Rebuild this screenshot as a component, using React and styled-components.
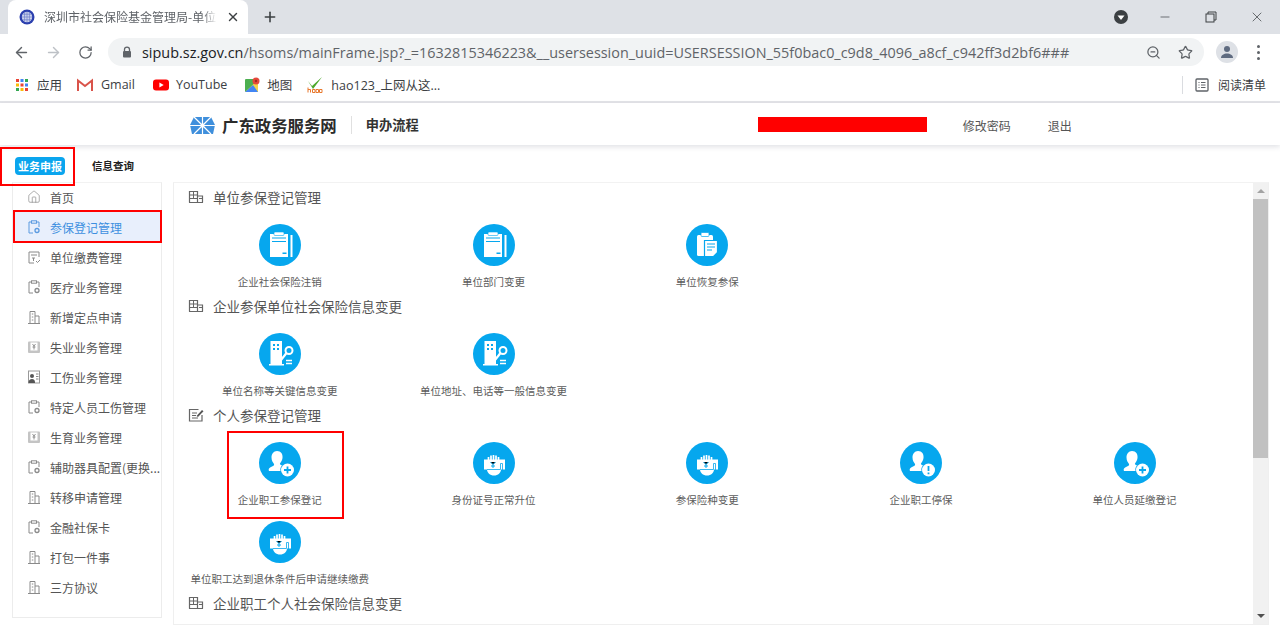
import React from "react";
import styled, { createGlobalStyle } from "styled-components";
import { ArrowLeft, ArrowRight, RotateCw, ZoomOut, Star, X, Plus, Minus, Home } from "lucide-react";

const Global = createGlobalStyle`
  html, body {
    margin: 0;
    height: 100%;
    overflow: hidden;
    background: #fff;
    font-family: "Noto Sans CJK SC", "Noto Sans", sans-serif;
  }
  *, *::before, *::after { box-sizing: border-box; }
`;

const Page = styled.div`
  width: 1280px;
  height: 633px;
  display: flex;
  flex-direction: column;
  overflow: hidden;
`;

/* browser chrome */
const TabStrip = styled.div`
  height: 34px;
  flex-shrink: 0;
  background: #dee1e6;
  display: flex;
  align-items: flex-end;
  padding-left: 8px;
`;

const BrowserTab = styled.div`
  width: 240px;
  height: 34px;
  padding: 0 8px 0 11px;
  background: #fff;
  border-radius: 8px 8px 0 0;
  display: flex;
  align-items: center;
  gap: 9px;
`;

const TabTitle = styled.span`
  flex: 1;
  font-size: 12px;
  line-height: 34px;
  color: #5f6368;
  white-space: nowrap;
  overflow: hidden;
  -webkit-mask-image: linear-gradient(to right, #000 92%, transparent);
  mask-image: linear-gradient(to right, #000 92%, transparent);
`;

const StripButton = styled.div`
  width: 28px;
  height: 34px;
  margin-left: ${(p) => p.$ml || 0}px;
  display: flex;
  align-items: center;
  justify-content: center;
  color: ${(p) => p.$color || "#3c4043"};
`;

const Toolbar = styled.div`
  height: 36px;
  flex-shrink: 0;
  background: #fff;
  padding: 4px 8px 4px 5px;
  display: flex;
  align-items: center;
`;

const NavButton = styled.div`
  width: 32px;
  height: 28px;
  display: flex;
  align-items: center;
  justify-content: center;
  color: ${(p) => (p.$off ? "#bdc1c6" : "#5f6368")};
`;

const Omnibox = styled.div`
  width: 1096px;
  height: 28px;
  margin-left: 7px;
  padding: 0 3px 0 13px;
  background: #f1f3f4;
  border-radius: 14px;
  display: flex;
  align-items: center;
`;

const Url = styled.div`
  flex: 1;
  margin-left: 9px;
  font-family: "Open Sans", sans-serif;
  font-size: 14.4px;
  letter-spacing: 0.01px;
  color: #5f6368;
  white-space: nowrap;
  overflow: hidden;
  b {
    font-weight: 400;
    color: #202124;
  }
`;

const OmniIcon = styled.div`
  width: 32px;
  display: flex;
  justify-content: center;
  color: #5f6368;
`;

const Avatar = styled.div`
  width: 22px;
  height: 22px;
  margin-left: 12px;
  border-radius: 50%;
  background: #dee1e6;
  display: flex;
  align-items: center;
  justify-content: center;
`;

const Dots = styled.div`
  margin-left: 19px;
  display: flex;
  flex-direction: column;
  gap: 3px;
  span {
    width: 3px;
    height: 3px;
    border-radius: 50%;
    background: #5f6368;
  }
`;

const Bookmarks = styled.div`
  height: 33px;
  flex-shrink: 0;
  padding: 0 14px 2px 15px;
  border-bottom: 2px solid #e3e4e8;
  display: flex;
  align-items: center;
  font-size: 12.5px;
  color: #3c4043;
`;

const Bookmark = styled.div`
  display: flex;
  align-items: center;
  gap: ${(p) => p.$gap || 8}px;
  margin-right: ${(p) => p.$mr || 16}px;
  font-family: "Open Sans", "Noto Sans CJK SC", sans-serif;
  white-space: nowrap;
`;

const ReadingList = styled.div`
  margin-left: auto;
  padding-left: 12px;
  height: 18px;
  border-left: 1px solid #dadce0;
  display: flex;
  align-items: center;
  gap: 9px;
  font-size: 12px;
`;

/* site header */
const SiteHeader = styled.header`
  height: 42px;
  flex-shrink: 0;
  padding: 2px 0 0 190px;
  background: #fff;
  box-shadow: 0 2px 5px rgba(120, 125, 140, 0.22);
  display: flex;
  align-items: center;
  position: relative;
`;

const SiteName = styled.div`
  margin-left: 7px;
  font-size: 16.4px;
  font-weight: 700;
  color: #2b2b2b;
  white-space: nowrap;
`;

const FlowName = styled.div`
  margin-left: 14px;
  padding-left: 14px;
  border-left: 1px solid #e0e0e0;
  font-size: 13.25px;
  line-height: 18px;
  font-weight: 700;
  color: #333;
`;

const HiddenName = styled.div`
  width: 169px;
  height: 15px;
  margin-left: 339px;
  margin-top: -1px;
  background: #ff0000;
`;

const HeaderLink = styled.a`
  margin-left: ${(p) => p.$ml}px;
  font-size: 12px;
  color: #555;
`;

const SiteTabs = styled.div`
  height: 37px;
  flex-shrink: 0;
  padding: 4px 0 0 15px;
  display: flex;
  align-items: center;
`;

const SiteTab = styled.div`
  position: relative;
  height: 18px;
  padding: 0 ${(p) => (p.$active ? 3 : 0)}px;
  margin-right: 27px;
  border-radius: 4px;
  background: ${(p) => (p.$active ? "#0aa5ee" : "transparent")};
  color: ${(p) => (p.$active ? "#fff" : "#222")};
  font-size: ${(p) => (p.$active ? 11 : 10.5)}px;
  font-weight: 700;
  line-height: 18px;
  white-space: nowrap;

  ${(p) =>
    p.$marked &&
    `&::after {
      content: "";
      position: absolute;
      left: -15px;
      top: -10px;
      width: 75px;
      height: 39px;
      border: 2px solid #f00;
    }`}
`;

/* page body */
const Body = styled.div`
  flex: 1;
  padding: 0 12px 0 12px;
  display: flex;
  align-items: flex-start;
  gap: 11px;
  min-height: 0;
`;

const Sidebar = styled.nav`
  width: 150px;
  height: 436px;
  flex-shrink: 0;
  border: 1px solid #ececec;
  border-top-color: #f2f2f2;
`;

const SideItem = styled.div`
  position: relative;
  height: 30px;
  margin-top: ${(p) => (p.$first ? -1 : 0)}px;
  padding-left: 14px;
  display: flex;
  align-items: center;
  gap: 9px;
  background: ${(p) => (p.$active ? "#e8effc" : "transparent")};
  color: ${(p) => (p.$active ? "#3d8fe0" : "#555")};
  font-size: 12px;
  white-space: nowrap;

  ${(p) =>
    p.$active &&
    `&::after {
      content: "";
      position: absolute;
      left: 0;
      top: -2px;
      right: -1px;
      bottom: -1px;
      border: 2px solid #f00;
    }`}
`;

const Panel = styled.main`
  width: 1096px;
  height: 443px;
  border: 1px solid #efefef;
  border-top-color: #f2f2f2;
  display: flex;
  flex-shrink: 0;
`;

const Content = styled.div`
  flex: 1;
  overflow: hidden;
  min-width: 0;
`;

const SectionHead = styled.div`
  height: 30px;
  padding: 0 0 2px 14px;
  display: flex;
  align-items: center;
  gap: 9px;
  font-size: 13.5px;
  color: #555;
`;

const TileGrid = styled.div`
  display: grid;
  grid-template-columns: repeat(5, 213.7px);
  margin-left: -1px;
`;

const Tile = styled.div`
  position: relative;
  height: 79px;
  padding-top: 11px;
  display: flex;
  flex-direction: column;
  align-items: center;

  ${(p) =>
    p.$marked &&
    `&::after {
      content: "";
      position: absolute;
      left: 54px;
      top: 0;
      width: 117px;
      height: 88px;
      border: 2px solid #f00;
    }`}
`;

const Disc = styled.div`
  width: 42px;
  height: 42px;
  border-radius: 50%;
  background: #06a7ee;
  flex-shrink: 0;
`;

const TileLabel = styled.div`
  margin-top: 7px;
  font-size: 10.5px;
  line-height: 18px;
  color: #5c5c5c;
  white-space: nowrap;
`;

const Scrollbar = styled.div`
  width: 15px;
  flex-shrink: 0;
  background: #f1f1f1;
  display: flex;
  flex-direction: column;
`;

const ScrollArrow = styled.div`
  height: 16px;
  flex-shrink: 0;
  display: flex;
  align-items: center;
  justify-content: center;
  &::before {
    content: "";
    border-left: 4px solid transparent;
    border-right: 4px solid transparent;
    ${(p) => (p.$up ? "border-bottom: 4px solid #a3a3a3;" : "border-top: 4px solid #505050;")}
  }
`;

const ScrollTrack = styled.div`
  flex: 1;
`;

const ScrollThumb = styled.div`
  height: 259px;
  background: #c1c1c1;
`;

/* drawn icons */
const Svg = ({ size = 14, children, vb }) => (
  <svg width={size} height={size} viewBox={vb || `0 0 ${size} ${size}`} fill="none" style={{ flexShrink: 0, display: "block" }}>
    {children}
  </svg>
);

const Favicon = () => (
  <Svg size={16}>
    <circle cx="8" cy="8" r="7.5" fill="#2b3fae" />
    <circle cx="8" cy="8" r="5.2" fill="#cfd6ee" />
    <path d="M3 8h10M8 3v10M4 5.2h8M4 10.8h8M5.6 3.4v9.2M10.4 3.4v9.2" stroke="#6c7cc8" strokeWidth=".7" />
  </Svg>
);

const Lock = () => (
  <Svg size={12}>
    <path d="M3.5 5V3.6a2.5 2.5 0 0 1 5 0V5" stroke="#5f6368" strokeWidth="1.3" />
    <rect x="2" y="5" width="8" height="6.5" rx="1" fill="#5f6368" />
  </Svg>
);

const Restore = () => (
  <Svg size={12}>
    <path d="M3 3V1h8v8H9" stroke="#3c4043" />
    <rect x="1" y="3" width="8" height="8" stroke="#3c4043" />
  </Svg>
);

const AppsGrid = () => {
  const colors = ["#ea4335", "#4285f4", "#34a853", "#fbbc05", "#ea4335", "#4285f4", "#34a853", "#fbbc05", "#ea4335"];
  return (
    <Svg size={14}>
      {colors.map((c, i) => (
        <rect key={i} x={1 + (i % 3) * 4.5} y={1 + Math.floor(i / 3) * 4.5} width="3" height="3" fill={c} />
      ))}
    </Svg>
  );
};

const GmailIcon = () => (
  <Svg size={16} vb="0 0 16 12">
    <path d="M1 12V1.5L8 7l7-5.5V12" stroke="#d9534a" strokeWidth="2" />
  </Svg>
);

const YoutubeIcon = () => (
  <Svg size={16}>
    <rect x="0" y="2.5" width="16" height="11" rx="3" fill="#f00" />
    <path d="M6.4 5.5v5l4.3-2.5z" fill="#fff" />
  </Svg>
);

const MapsIcon = () => (
  <Svg size={15}>
    <rect x="0" y="2" width="13" height="13" rx="1" fill="#4caf50" />
    <path d="M0 15 13 3v12z" fill="#f4d34a" />
    <path d="M0 15 8 8l5 7z" fill="#4285f4" />
    <circle cx="11" cy="4" r="3.5" fill="#e5483a" />
    <circle cx="11" cy="4" r="1.2" fill="#a32a20" />
  </Svg>
);

const HaoIcon = () => (
  <Svg size={16}>
    <path d="M1 4l4 5L15 0 6 12z" fill="#4ca82c" />
    <path d="M1 10.500V15.500M1 12.500h2.500V15.500M8 12.500H5.500v3H8zM11.500 12.500h-2.500v3h2.500zM15 12.500h-2.500v3H15z" stroke="#e8792e" strokeWidth="1" />
  </Svg>
);

const ReaderIcon = () => (
  <Svg size={14}>
    <rect x="1" y="1" width="12" height="12" rx="1" stroke="#5f6368" strokeWidth="1.3" />
    <path d="M3.500 4.500h1M6 4.500h4.500M3.500 7h1M6 7h4.500M3.500 9.500h1M6 9.500h4.500" stroke="#5f6368" />
  </Svg>
);

const SiteLogo = () => (
  <Svg size={25} vb="0 0 25 19">
    <path d="M4 1h17l4 8-2 9H2L0 9z" fill="#3f8fdc" />
    <path d="M12.500 1v17M4 1l17 17M21 1 4 18M0 9.500h25" stroke="#fff" strokeWidth="1.200" />
    <circle cx="12.500" cy="9.500" r="2" fill="#fff" />
  </Svg>
);

const gray = "#8a8a8a";

const ClipGearIcon = ({ color = gray }) => (
  <Svg size={14}>
    <path d="M5 2H2v11h4M9 2h3v5" stroke={color} />
    <rect x="4.500" y=".8" width="5" height="2.400" stroke={color} />
    <circle cx="10" cy="10.500" r="2" stroke={color} strokeWidth="1.300" />
  </Svg>
);

const BuildingIcon = () => (
  <Svg size={14}>
    <path d="M3 13V1.500h5V13M8 6h4v7M1 13.500h12M4.800 4h1.500M4.800 7h1.500M4.800 10h1.500" stroke={gray} />
  </Svg>
);

const BillIcon = () => (
  <Svg size={14}>
    <path d="M12 7V2H2v11h5" stroke={gray} />
    <path d="M4 5h6M5 8h3M6.500 8v3M9 11l1.500 1.500L13 10" stroke={gray} />
  </Svg>
);

const YenIcon = () => (
  <Svg size={14}>
    <rect x="1" y="1.500" width="12" height="11.500" rx="1" fill="#c4c4c4" />
    <rect x="3.500" y="2.500" width="7" height="8" fill="#fff" />
    <path d="M5.500 4 7 6l1.500-2M7 6v3.500M5.500 7h3" stroke="#777" strokeWidth=".8" />
  </Svg>
);

const StaffIcon = () => (
  <Svg size={14}>
    <rect x="1.500" y="1" width="11" height="12" fill="#fff" stroke="#999" />
    <circle cx="5" cy="6" r="2" fill="#555" />
    <path d="M1.500 13c0-3 1.500-4 3.500-4s3 1 3 4z" fill="#555" />
    <path d="M9 4h2.500M9 6.500h2.500M9 9h2.500" stroke="#888" />
  </Svg>
);

const HeadBuilding = () => (
  <Svg size={16}>
    <path d="M1.500 13.500V2.500h8v11M9.500 7h5v6.500M1 13.500h14" stroke="#666" strokeWidth="1.200" />
    <path d="M1.500 6h8M1.500 9.500h8M5.500 2.500V9.500M11 9.500h3" stroke="#666" />
  </Svg>
);

const HeadEdit = () => (
  <Svg size={16}>
    <path d="M14 8v6H1.500V2.500h9" stroke="#666" strokeWidth="1.200" />
    <path d="M4 6h5M4 8.500h4M4 11h6" stroke="#666" />
    <path d="M8.500 9 14 3l1.500 1.300L10 10z" fill="#555" />
  </Svg>
);

const DiscIcon = ({ children }) => (
  <Disc>
    <svg width="42" height="42" viewBox="0 0 42 42" style={{ display: "block" }}>
      {children}
    </svg>
  </Disc>
);

const ClipboardDisc = () => (
  <DiscIcon>
    <rect x="11" y="10" width="18" height="23" fill="#fff" />
    <rect x="15" y="8" width="10" height="3.500" rx="1" fill="#fff" stroke="#06a7ee" strokeWidth=".6" />
    <path d="M13 14h14M13 17.500h14" stroke="#06a7ee" strokeWidth="1.200" />
    <rect x="23.500" y="28.500" width="4" height="1.500" fill="#06a7ee" />
    <path d="M32.500 11v22" stroke="#fff" strokeWidth="2" />
  </DiscIcon>
);

const RestoreDisc = () => (
  <DiscIcon>
    <rect x="11" y="11" width="16" height="21" rx="1.500" fill="#fff" />
    <rect x="15" y="8.500" width="8" height="4" rx="1" fill="#fff" stroke="#06a7ee" strokeWidth=".7" />
    <path d="M18.500 16.500h13v12l-4 4h-9z" fill="#fff" stroke="#06a7ee" strokeWidth="1.200" />
    <path d="M21 20h8M21 23h8M21 26h5" stroke="#06a7ee" strokeWidth="1.100" />
  </DiscIcon>
);

const KeyDisc = () => (
  <DiscIcon>
    <rect x="11.500" y="8" width="11.500" height="23" fill="#fff" />
    <rect x="10" y="31" width="15" height="1.500" fill="#fff" />
    <path d="M14 12h2M18 12h2M14 16h2M18 16h2" stroke="#06a7ee" strokeWidth="2" />
    <circle cx="30" cy="17.500" r="3.500" fill="none" stroke="#fff" strokeWidth="2" />
    <path d="M27.500 20 22 27" stroke="#fff" strokeWidth="2.200" />
    <path d="M27 27.500h6M27 30.500h6" stroke="#fff" strokeWidth="1.300" />
  </DiscIcon>
);

const PersonDisc = ({ badge }) => (
  <DiscIcon>
    <path d="M18 9c4 0 6 3 5.500 7-.3 2.500-1.700 4.500-2.500 5.500-.4.800.5 1.500 2 2-1.500 1.500-2 3.500-1.500 5.500H10c-1-1.500 0-3.500 3-4.500 1.500-.5 2.500-1.200 2-2.500-1-1.500-2.500-3-2.500-6.500C12.500 12 14.500 9 18 9z" fill="#fff" />
    <circle cx="28.500" cy="28" r="6.500" fill="#fff" />
    {badge === "plus" ? (
      <path d="M25 28h7M28.500 24.500v7" stroke="#06a7ee" strokeWidth="1.800" />
    ) : (
      <path d="M28.500 24v5M28.500 30.500v1.800" stroke="#06a7ee" strokeWidth="1.800" />
    )}
  </DiscIcon>
);

const HandDisc = () => (
  <DiscIcon>
    <path d="M14 27h14c0 4-3 6.500-7 6.500S14 31 14 27z" fill="#fff" />
    <path d="M15.500 15v5M18 13.500v6M20.500 13v6M23 13.500v6M25.500 15v5" stroke="#fff" strokeWidth="1.700" />
    <rect x="11" y="17.500" width="21" height="10" fill="#fff" />
    <path d="M17.500 20l2.500 2.500 2.500-2.500M20 22.500v3.500M18 24h4" stroke="#06a7ee" strokeWidth="1" />
    <path d="M14 27.500h13.500v-6h2v8" stroke="#06a7ee" strokeWidth=".8" fill="none" />
  </DiscIcon>
);

const sideItems = [
  ["首页", <Home key="h" size={14} color={gray} strokeWidth={1.2} />],
  ["参保登记管理", <ClipGearIcon key="a" color="#5b9ae0" />],
  ["单位缴费管理", <BillIcon key="b" />],
  ["医疗业务管理", <ClipGearIcon key="c" />],
  ["新增定点申请", <BuildingIcon key="d" />],
  ["失业业务管理", <YenIcon key="e" />],
  ["工伤业务管理", <StaffIcon key="f" />],
  ["特定人员工伤管理", <ClipGearIcon key="g" />],
  ["生育业务管理", <YenIcon key="i" />],
  ["辅助器具配置(更换...", <ClipGearIcon key="j" />],
  ["转移申请管理", <BuildingIcon key="k" />],
  ["金融社保卡", <ClipGearIcon key="l" />],
  ["打包一件事", <BuildingIcon key="m" />],
  ["三方协议", <BuildingIcon key="n" />],
];

const sections = [
  {
    title: "单位参保登记管理",
    icon: <HeadBuilding />,
    tiles: [
      ["企业社会保险注销", <ClipboardDisc />],
      ["单位部门变更", <ClipboardDisc />],
      ["单位恢复参保", <RestoreDisc />],
    ],
  },
  {
    title: "企业参保单位社会保险信息变更",
    icon: <HeadBuilding />,
    tiles: [
      ["单位名称等关键信息变更", <KeyDisc />],
      ["单位地址、电话等一般信息变更", <KeyDisc />],
    ],
  },
  {
    title: "个人参保登记管理",
    icon: <HeadEdit />,
    tiles: [
      ["企业职工参保登记", <PersonDisc badge="plus" />, true],
      ["身份证号正常升位", <HandDisc />],
      ["参保险种变更", <HandDisc />],
      ["企业职工停保", <PersonDisc badge="warn" />],
      ["单位人员延缴登记", <PersonDisc badge="plus" />],
      ["单位职工达到退休条件后申请继续缴费", <HandDisc />],
    ],
  },
  {
    title: "企业职工个人社会保险信息变更",
    icon: <HeadBuilding />,
    tiles: [],
  },
];

export default function App() {
  return (
    <Page>
      <Global />
      <TabStrip>
        <BrowserTab>
          <Favicon />
          <TabTitle>深圳市社会保险基金管理局-单位</TabTitle>
          <X size={14} color="#3c4043" strokeWidth={2.4} />
        </BrowserTab>
        <StripButton $ml={8}>
          <Plus size={16} strokeWidth={2.4} />
        </StripButton>
        <StripButton $ml={823}>
          <Svg size={16}>
            <circle cx="8" cy="8" r="7" fill="#3c4043" />
            <path d="M4.500 6.500h7L8 11z" fill="#fff" />
          </Svg>
        </StripButton>
        <StripButton $ml={16}>
          <Minus size={14} strokeWidth={1.2} />
        </StripButton>
        <StripButton $ml={18}>
          <Restore />
        </StripButton>
        <StripButton $ml={18}>
          <X size={16} strokeWidth={1.1} />
        </StripButton>
      </TabStrip>

      <Toolbar>
        <NavButton>
          <ArrowLeft size={17} />
        </NavButton>
        <NavButton $off>
          <ArrowRight size={17} />
        </NavButton>
        <NavButton>
          <RotateCw size={15} />
        </NavButton>
        <Omnibox>
          <Lock />
          <Url>
            <b>sipub.sz.gov.cn</b>/hsoms/mainFrame.jsp?_=1632815346223&__usersession_uuid=USERSESSION_55f0bac0_c9d8_4096_a8cf_c942ff3d2bf6###
          </Url>
          <OmniIcon>
            <ZoomOut size={15} />
          </OmniIcon>
          <OmniIcon>
            <Star size={15} />
          </OmniIcon>
        </Omnibox>
        <Avatar>
          <Svg size={14}>
            <circle cx="7" cy="4" r="3" fill="#5f6b80" />
            <path d="M1 13c0-3 3-4.500 6-4.500s6 1.500 6 4.500z" fill="#5f6b80" />
          </Svg>
        </Avatar>
        <Dots>
          <span />
          <span />
          <span />
        </Dots>
      </Toolbar>

      <Bookmarks>
        <Bookmark $mr={15}>
          <AppsGrid />
          <span>应用</span>
        </Bookmark>
        <Bookmark $mr={18}>
          <GmailIcon />
          <span>Gmail</span>
        </Bookmark>
        <Bookmark $mr={18} $gap={7}>
          <YoutubeIcon />
          <span>YouTube</span>
        </Bookmark>
        <Bookmark $mr={15} $gap={7}>
          <MapsIcon />
          <span>地图</span>
        </Bookmark>
        <Bookmark>
          <HaoIcon />
          <span>hao123_上网从这...</span>
        </Bookmark>
        <ReadingList>
          <ReaderIcon />
          <span>阅读清单</span>
        </ReadingList>
      </Bookmarks>

      <SiteHeader>
        <SiteLogo />
        <SiteName>广东政务服务网</SiteName>
        <FlowName>申办流程</FlowName>
        <HiddenName />
        <HeaderLink $ml={36}>修改密码</HeaderLink>
        <HeaderLink $ml={37}>退出</HeaderLink>
      </SiteHeader>

      <SiteTabs>
        <SiteTab $active $marked>
          业务申报
        </SiteTab>
        <SiteTab>信息查询</SiteTab>
      </SiteTabs>

      <Body>
        <Sidebar>
          {sideItems.map(([label, icon], i) => (
            <SideItem key={label} $first={i === 0} $active={i === 1}>
              {icon}
              <span>{label}</span>
            </SideItem>
          ))}
        </Sidebar>
        <Panel>
          <Content>
            {sections.map((s) => (
              <div key={s.title}>
                <SectionHead>
                  {s.icon}
                  <span>{s.title}</span>
                </SectionHead>
                {s.tiles.length > 0 && (
                  <TileGrid>
                    {s.tiles.map(([label, icon, marked]) => (
                      <Tile key={label} $marked={marked}>
                        {icon}
                        <TileLabel>{label}</TileLabel>
                      </Tile>
                    ))}
                  </TileGrid>
                )}
              </div>
            ))}
          </Content>
          <Scrollbar>
            <ScrollArrow $up />
            <ScrollTrack>
              <ScrollThumb />
            </ScrollTrack>
            <ScrollArrow />
          </Scrollbar>
        </Panel>
      </Body>
    </Page>
  );
}
